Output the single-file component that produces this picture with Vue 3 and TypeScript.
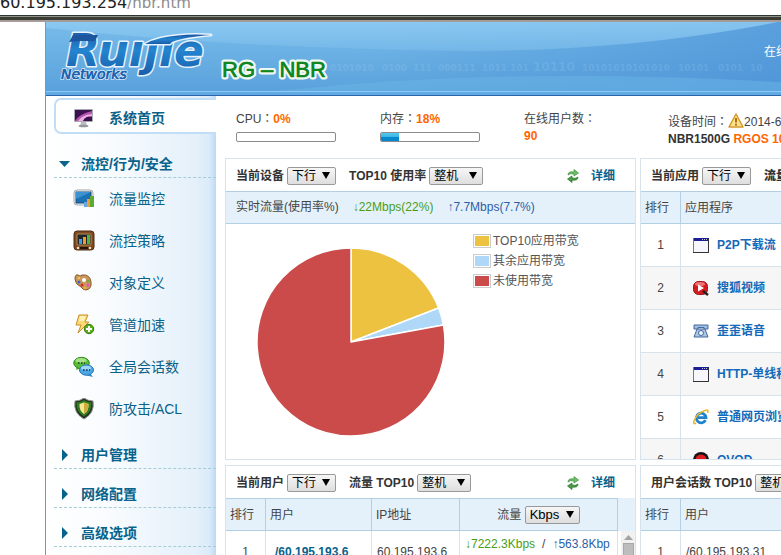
<script setup lang="ts">
import { computed, ref } from 'vue'

interface Slice {
  label: string
  value: number
  color: string
}

const menu = [
  { icon: 'monitor', label: '流量监控' },
  { icon: 'policy', label: '流控策略' },
  { icon: 'palette', label: '对象定义' },
  { icon: 'bolt', label: '管道加速' },
  { icon: 'chat', label: '全局会话数' },
  { icon: 'shield', label: '防攻击/ACL' },
]
const groups = ['用户管理', '网络配置', '高级选项']

const cpu = 0
const memory = 18

const slices: Slice[] = [
  { label: 'TOP10应用带宽', value: 19.1, color: '#edc240' },
  { label: '其余应用带宽', value: 3, color: '#afd8f8' },
  { label: '未使用带宽', value: 77.9, color: '#cb4b4b' },
]

const point = (share: number): string => {
  const a = (share / 100) * Math.PI * 2
  return `${(95 + 94 * Math.sin(a)).toFixed(2)} ${(95 - 94 * Math.cos(a)).toFixed(2)}`
}

const wedges = computed(() => {
  let start = 0
  return slices.map((s) => {
    const end = start + s.value
    const d = `M95 95L${point(start)}A94 94 0 ${s.value > 50 ? 1 : 0} 1 ${point(end)}Z`
    start = end
    return { d, color: s.color }
  })
})

const apps = [
  { icon: 'window', name: 'P2P下载流' },
  { icon: 'sohu', name: '搜狐视频' },
  { icon: 'phone', name: '歪歪语音' },
  { icon: 'window', name: 'HTTP-单线程' },
  { icon: 'ie', name: '普通网页浏览' },
  { icon: 'qvod', name: 'QVOD' },
]

const deviceDir = ref('下行')
const deviceScope = ref('整机')
const appDir = ref('下行')
const userDir = ref('下行')
const userScope = ref('整机')
const unit = ref('Kbps')
const sessionScope = ref('整机')
</script>

<template>
  <div class="address"><span>60.195.193.254<i>/hbr.htm</i></span></div>
  <div class="page">
    <header class="banner">
      <svg class="scene" viewBox="0 0 1100 69" aria-hidden="true">
        <defs>
          <linearGradient id="base" x1="0" y1="0" x2="0" y2="1">
            <stop offset="0" stop-color="#78bcea" />
            <stop offset="1" stop-color="#5aa2dc" />
          </linearGradient>
          <linearGradient id="depth" x1="0" y1="0" x2="1" y2="0">
            <stop offset="0.3" stop-color="#4a90d6" stop-opacity="0" />
            <stop offset="0.7" stop-color="#4a90d6" stop-opacity="0.7" />
          </linearGradient>
          <linearGradient id="gloss" x1="0" y1="0" x2="0" y2="1">
            <stop offset="0" stop-color="#8ecbf3" />
            <stop offset="1" stop-color="#76b8e8" />
          </linearGradient>
        </defs>
        <rect width="1100" height="69" fill="url(#base)" />
        <rect width="1100" height="69" fill="url(#depth)" />
        <path d="M0 6Q200 27 430 29Q590 28 732 0H0Z" fill="url(#gloss)" opacity="0.85" />
        <path d="M230 69Q370 54 520 54Q650 54 760 62L1100 69Z" fill="#6db9e6" opacity="0.45" />
        <g fill="#a8d4f4" fill-opacity="0.2" font-family="'DejaVu Sans', sans-serif" font-weight="bold" font-size="9">
          <text x="284" y="49">0101010</text>
          <text x="336" y="49">0100</text>
          <text x="367" y="49">111</text>
          <text x="392" y="49">000111</text>
          <text x="436" y="49">1011</text>
          <text x="464" y="49">101</text>
          <text x="536" y="49">10101010101010</text>
          <text x="632" y="49">10101</text>
          <text x="672" y="49">0101</text>
          <text x="704" y="49">10</text>
          <text x="487" y="49" font-size="12">10110</text>
        </g>
      </svg>
      <svg class="logo" viewBox="0 0 290 69" role="img" aria-label="Ruijie Networks RG – NBR">
        <defs>
          <linearGradient id="ink" x1="0" y1="0" x2="0" y2="1">
            <stop offset="0" stop-color="#1c4f9e" />
            <stop offset="0.5" stop-color="#2385d0" />
            <stop offset="1" stop-color="#1a5ca8" />
          </linearGradient>
        </defs>
        <g stroke="#e6f3fc" stroke-width="3" stroke-linejoin="round" paint-order="stroke" font-family="'DejaVu Sans', sans-serif" font-weight="bold" font-style="italic">
          <text x="20" y="44" font-size="44" fill="url(#ink)">Ruıȷıe</text>
          <path d="M99 22Q106 18 115 16Q138 11 165 13Q138 15 126 20L124 22Z" fill="url(#ink)" />
          <path d="M23 20L27 13H52L49 19H33Z" fill="#1d569f" stroke="none" />
          <text x="15" y="57" font-size="14" font-weight="normal" fill="#1d62b0" stroke-width="2">Networks</text>
          <text x="15" y="57" font-size="14" font-weight="normal" fill="#1d62b0" stroke="#1d62b0" stroke-width="0.500" aria-hidden="true">Networks</text>
        </g>
        <text x="176" y="55" font-family="'Liberation Sans', sans-serif" font-size="22" fill="#108622" stroke="#eef8f0" stroke-width="5" stroke-linejoin="round" paint-order="stroke">RG – NBR</text>
        <text x="176" y="55" font-family="'Liberation Sans', sans-serif" font-size="22" fill="#108622" stroke="#108622" stroke-width="0.500" aria-hidden="true">RG – NBR</text>
      </svg>
      <nav class="toplinks"><a href="#service">在线</a></nav>
    </header>

    <div class="body">
      <aside class="side">
        <a class="home" href="#home">
          <svg class="icon" viewBox="0 0 22 22" aria-hidden="true">
            <rect x="1" y="2" width="19" height="13" rx="1" fill="#a9abb2" />
            <rect x="2" y="3" width="17" height="11" fill="#3b124f" />
            <path d="M2 14Q6 7 19 4V10Q10 9 7 14Z" fill="#b555ae" />
            <path d="M5 14Q9 8 19 7V9Q12 9 10 14Z" fill="#eab0e2" />
            <path d="M8 15H13L14 19H7Z" fill="#b9bcc1" />
            <ellipse cx="10.500" cy="19" rx="5" ry="1.300" fill="#95989d" />
          </svg>
          <b>系统首页</b>
        </a>
        <button class="group" type="button" aria-expanded="true">
          <svg viewBox="0 0 12 12" aria-hidden="true"><path d="M0 3H11L5.500 9Z" fill="#07628c" /></svg>流控/行为/安全
        </button>
        <a v-for="m in menu" :key="m.label" class="item" href="#item">
          <svg class="icon" viewBox="0 0 22 22" aria-hidden="true">
            <g v-if="m.icon === 'monitor'">
              <rect x="1" y="2" width="19" height="15" rx="3" fill="#f3f5f6" stroke="#a4a9ac" />
              <rect x="3" y="4" width="15" height="11" fill="#1d72b5" stroke="#174a75" />
              <path d="M3 4H18L3 11Z" fill="#3b93d2" />
              <rect x="11" y="14" width="3" height="5" fill="#5fa9e6" />
              <rect x="14" y="11" width="3" height="8" fill="#f19b32" />
              <rect x="17" y="8" width="4" height="11" fill="#58ab37" />
            </g>
            <g v-else-if="m.icon === 'policy'">
              <rect x="1" y="1" width="20" height="19" rx="3" fill="#7f4a20" stroke="#4e2a10" />
              <rect x="4" y="4" width="14" height="11" rx="1" fill="#20262a" stroke="#b98b58" />
              <rect x="6" y="9" width="3" height="5" fill="#3f9ede" />
              <rect x="10" y="7" width="3" height="7" fill="#f39b2c" />
              <rect x="14" y="5" width="3" height="9" fill="#4eb33c" />
              <path d="M7 18H15" stroke="#1f1712" stroke-width="2" />
              <circle cx="5" cy="18" r="1.200" fill="#eee1cc" />
              <circle cx="17" cy="18" r="1.200" fill="#eee1cc" />
            </g>
            <g v-else-if="m.icon === 'palette'">
              <path d="M2 7Q2 2 5 3Q7 5 9 3Q17 2 18 10Q19 17 13 18Q10 18 8 15Q2 12 2 7Z" fill="#c9975e" stroke="#8a5728" />
              <circle cx="11" cy="8" r="2" fill="#fff" />
              <circle cx="6" cy="6" r="1.300" fill="#efc15b" />
              <circle cx="6" cy="10" r="1.500" fill="#3c67c6" />
              <circle cx="9" cy="13" r="1.500" fill="#d92727" />
              <circle cx="15" cy="9" r="1.500" fill="#70a836" />
              <circle cx="15" cy="13" r="1.500" fill="#e44fc1" />
              <circle cx="12" cy="16" r="1.200" fill="#e6bc34" />
            </g>
            <g v-else-if="m.icon === 'bolt'">
              <path d="M6 1H15L12 8H16L5 19L8 11H3Z" fill="#fbd977" stroke="#c99029" />
              <path d="M7 2H13L11 7H6Z" fill="#fff0b6" />
              <circle cx="16" cy="15" r="4.700" fill="#5aad1c" stroke="#367c0b" />
              <path d="M16 12V18M13 15H19" stroke="#fff" stroke-width="2" />
            </g>
            <g v-else-if="m.icon === 'chat'">
              <path d="M4 10L3 14L8 12Z" fill="#43a52a" />
              <ellipse cx="8.500" cy="7" rx="7.800" ry="5.700" fill="#58bc36" stroke="#2f8a1d" />
              <ellipse cx="8" cy="4.500" rx="5.500" ry="2.500" fill="#a3e086" />
              <path d="M16 16L20 21L12 19Z" fill="#2f86c4" />
              <ellipse cx="13.500" cy="14" rx="7" ry="5.200" fill="#4ba7e4" stroke="#2878b5" />
              <ellipse cx="13" cy="12" rx="5" ry="2.200" fill="#9dd4f7" />
              <path d="M5 7H12" stroke="#123c12" stroke-width="1.600" stroke-dasharray="1.600 1.400" />
              <path d="M10 14H17" stroke="#0c2e4b" stroke-width="1.600" stroke-dasharray="1.600 1.400" />
            </g>
            <g v-else>
              <path d="M11 0Q15 3 20 3Q22 15 11 21Q0 15 2 3Q7 3 11 0Z" fill="#253224" stroke="#90958e" />
              <path d="M11 2Q14 4 18.500 4.500Q19 14 11 18.500Q3 14 3.500 4.500Q8 4 11 2Z" fill="#2f7d1e" />
              <path d="M11 4.500L15.500 6Q16 13 11 16Q6 13 6.500 6Z" fill="#f4e78c" />
              <path d="M11 4.500L15.500 6Q16 13 11 16Z" fill="#cfae40" />
            </g>
          </svg>
          {{ m.label }}
        </a>
        <button v-for="g in groups" :key="g" class="group" type="button" aria-expanded="false">
          <svg viewBox="0 0 12 12" aria-hidden="true"><path d="M3 0L9 6L3 12Z" fill="#07628c" /></svg>{{ g }}
        </button>
      </aside>

      <main class="main">
        <section class="stats">
          <div>
            <p>CPU<span class="colon">：</span><strong>{{ cpu }}%</strong></p>
            <div class="meter"><div :style="{ width: cpu + '%' }" /></div>
          </div>
          <div>
            <p>内存<span class="colon">：</span><strong>{{ memory }}%</strong></p>
            <div class="meter"><div :style="{ width: memory + '%' }" /></div>
          </div>
          <div>
            <p>在线用户数<span class="colon">：</span></p>
            <p><strong>90</strong></p>
          </div>
          <div class="device">
            <p>
              设备时间<span class="colon">：</span><svg viewBox="0 0 16 15" aria-hidden="true">
                <path d="M8 1L15 14H1Z" fill="#fbe38c" stroke="#d49a2c" stroke-width="1.500" stroke-linejoin="round" />
                <path d="M8 5V9.500" stroke="#b46d12" stroke-width="2" />
                <circle cx="8" cy="11.700" r="1.100" fill="#b46d12" />
              </svg>2014-6
            </p>
            <p><b>NBR1500G</b> <strong>RGOS 10.</strong></p>
          </div>
        </section>

        <div class="grid">
          <section class="panel tall">
            <div class="head">
              <label for="dev-dir">当前设备</label>
              <span class="pick"><select id="dev-dir" v-model="deviceDir"><option>下行</option></select><svg viewBox="0 0 8 7" aria-hidden="true"><path d="M0 0H8L4 7Z" /></svg></span>
              <label class="next" for="dev-scope">TOP10 使用率</label>
              <span class="pick wide"><select id="dev-scope" v-model="deviceScope"><option>整机</option></select><svg viewBox="0 0 8 7" aria-hidden="true"><path d="M0 0H8L4 7Z" /></svg></span>
              <button class="refresh" type="button" aria-label="刷新">
                <svg viewBox="0 0 12 14" aria-hidden="true">
                  <path d="M1 6Q1 2 7 3V0.500L11.500 4L7 7V5Q3 4 1 6Z" fill="#6fbe68" stroke="#3d8c3a" stroke-width="0.700" />
                  <path d="M11 8Q11 12 5 11V13.500L0.500 10L5 7V9Q9 10 11 8Z" fill="#469d42" stroke="#2a6f2b" stroke-width="0.700" />
                </svg>
              </button>
              <a class="more" href="#detail">详细</a>
            </div>
            <div class="rate">实时流量(使用率%)<span class="down">↓22Mbps(22%)</span><span class="up">↑7.7Mbps(7.7%)</span></div>
            <div class="chart">
              <svg viewBox="0 0 190 190" role="img" aria-label="带宽">
                <path v-for="w in wedges" :key="w.color" :d="w.d" :fill="w.color" stroke="#fff" stroke-width="1.500" stroke-linejoin="round" />
              </svg>
              <ul>
                <li v-for="s in slices" :key="s.label"><span class="swatch"><i :style="{ background: s.color }" /></span>{{ s.label }}</li>
              </ul>
            </div>
          </section>

          <section class="panel tall">
            <div class="head">
              <label for="app-dir">当前应用</label>
              <span class="pick"><select id="app-dir" v-model="appDir"><option>下行</option></select><svg viewBox="0 0 8 7" aria-hidden="true"><path d="M0 0H8L4 7Z" /></svg></span>
              <b class="next">流量</b>
            </div>
            <table class="apps">
              <colgroup><col class="rank" /><col /></colgroup>
              <thead><tr><th>排行</th><th>应用程序</th></tr></thead>
              <tbody>
                <tr v-for="(a, i) in apps" :key="i">
                  <td>{{ i + 1 }}</td>
                  <td>
                    <a href="#app">
                      <svg viewBox="0 0 16 16" aria-hidden="true">
                        <g v-if="a.icon === 'window'">
                          <rect x="0.500" y="1.500" width="15" height="14" fill="#f6f6fc" stroke="#777" />
                          <path d="M1 1H16V4H1Z" fill="#1d1d96" />
                          <path d="M9 2.500H15" stroke="#c5c5d8" stroke-dasharray="1 1" />
                          <path d="M0 15.500H15.500V2" fill="none" stroke="#333" />
                        </g>
                        <g v-else-if="a.icon === 'sohu'">
                          <rect x="0.500" y="1.500" width="14" height="13" rx="5" fill="#d31c20" stroke="#9e1418" />
                          <ellipse cx="7" cy="4" rx="5" ry="2" fill="#ef7377" />
                          <path d="M5 4.500L11 8L5 11.500Z" fill="#fff" />
                          <path d="M10 11L15 15" stroke="#222" stroke-width="2.500" />
                        </g>
                        <g v-else-if="a.icon === 'phone'">
                          <path d="M1 2H15V6H11V4.500H5V6H1Z" fill="#9fbfe2" stroke="#45699b" />
                          <path d="M4 6H12L15 14H1Z" fill="#a9c6e7" stroke="#45699b" />
                          <circle cx="8" cy="10" r="2.500" fill="#edf4fc" stroke="#45699b" />
                        </g>
                        <g v-else-if="a.icon === 'ie'">
                          <path d="M12.500 11.200A4.800 4.800 0 1 1 13 8.700H5" fill="none" stroke="#1e83cc" stroke-width="2.800" />
                          <path d="M3 14Q0 16 1 12Q4 4 12 1.500Q16 0 14.500 4" fill="none" stroke="#e8b92e" stroke-width="1.600" />
                        </g>
                        <g v-else>
                          <circle cx="8" cy="8" r="8" fill="#151515" />
                          <circle cx="8" cy="8" r="5.500" fill="#e11c22" />
                        </g>
                      </svg>{{ a.name }}
                    </a>
                  </td>
                </tr>
              </tbody>
            </table>
          </section>

          <section class="panel">
            <div class="head">
              <label for="user-dir">当前用户</label>
              <span class="pick"><select id="user-dir" v-model="userDir"><option>下行</option></select><svg viewBox="0 0 8 7" aria-hidden="true"><path d="M0 0H8L4 7Z" /></svg></span>
              <label class="next" for="user-scope">流量 TOP10</label>
              <span class="pick wide"><select id="user-scope" v-model="userScope"><option>整机</option></select><svg viewBox="0 0 8 7" aria-hidden="true"><path d="M0 0H8L4 7Z" /></svg></span>
              <button class="refresh" type="button" aria-label="刷新">
                <svg viewBox="0 0 12 14" aria-hidden="true">
                  <path d="M1 6Q1 2 7 3V0.500L11.500 4L7 7V5Q3 4 1 6Z" fill="#6fbe68" stroke="#3d8c3a" stroke-width="0.700" />
                  <path d="M11 8Q11 12 5 11V13.500L0.500 10L5 7V9Q9 10 11 8Z" fill="#469d42" stroke="#2a6f2b" stroke-width="0.700" />
                </svg>
              </button>
              <a class="more" href="#detail">详细</a>
            </div>
            <div class="scroller">
              <table class="users">
                <colgroup><col class="rank" /><col class="user" /><col class="ip" /><col /></colgroup>
                <thead>
                  <tr>
                    <th>排行</th>
                    <th>用户</th>
                    <th>IP地址</th>
                    <th class="flow"><label for="unit">流量</label> <span class="pick unit"><select id="unit" v-model="unit"><option>Kbps</option></select><svg viewBox="0 0 8 7" aria-hidden="true"><path d="M0 0H8L4 7Z" /></svg></span></th>
                  </tr>
                </thead>
                <tbody>
                  <tr>
                    <td>1</td>
                    <td><a href="#user">/60.195.193.6</a></td>
                    <td>60.195.193.6</td>
                    <td class="speed"><span class="down">↓7222.3Kbps</span><span class="slash">/</span><span class="up">↑563.8Kbp</span></td>
                  </tr>
                </tbody>
              </table>
              <div class="track" aria-hidden="true">
                <svg viewBox="0 0 14 12"><path d="M3 9H12L7.500 4Z" fill="#a3a3a3" /></svg>
                <div class="thumb" />
              </div>
            </div>
          </section>

          <section class="panel">
            <div class="head">
              <label for="ses-scope">用户会话数 TOP10</label>
              <span class="pick wide"><select id="ses-scope" v-model="sessionScope"><option>整机</option></select><svg viewBox="0 0 8 7" aria-hidden="true"><path d="M0 0H8L4 7Z" /></svg></span>
            </div>
            <table class="sessions">
              <colgroup><col class="rank" /><col /></colgroup>
              <thead><tr><th>排行</th><th>用户</th></tr></thead>
              <tbody><tr><td>1</td><td>/60.195.193.31</td></tr></tbody>
            </table>
          </section>
        </div>
      </main>
    </div>
  </div>
</template>

<style>
html,
body {
  margin: 0;
  overflow: hidden;
  background: #fff;
}
#app {
  height: 100vh;
  overflow: hidden;
  display: flex;
  flex-direction: column;
}
</style>

<style scoped>
* {
  box-sizing: border-box;
}
p,
ul {
  margin: 0;
  padding: 0;
  list-style: none;
}
a {
  text-decoration: none;
}
.address {
  flex: none;
  display: flex;
  align-items: flex-end;
  height: 22px;
  padding-bottom: 8px;
  overflow: hidden;
  font: 16px/22px 'DejaVu Sans', sans-serif;
  color: #222;
  background: linear-gradient(#fff 15px, #2d352f 15px, #2d352f 16px, #91928a 16px, #91928a 17px, #3b3c33 17px, #3b3c33 20px, #a59c99 20px);
}
.address i {
  font-size: 15px;
  font-style: normal;
  color: #8c8c8c;
}
.page {
  flex: 1;
  display: flex;
  flex-direction: column;
  min-width: 1006px;
  margin-left: 45px;
  border-left: 1px solid #7699b5;
  overflow: hidden;
  font: 12px/18px 'Liberation Sans', 'Noto Sans CJK SC', sans-serif;
  color: #444;
}
.banner {
  position: relative;
  flex: none;
  display: flex;
  height: 74px;
  overflow: hidden;
  border-bottom: 1px solid #2965a8;
  background: linear-gradient(#8dcaf5 69px, #8dcaf5 70px, #62aae3 70px);
}
.scene {
  position: absolute;
  top: 0;
  left: 0;
  width: 1100px;
  height: 69px;
}
.logo {
  position: relative;
  width: 290px;
  height: 69px;
}
.toplinks {
  position: relative;
  margin-left: auto;
  padding: 21px 263px 0 0;
}
.toplinks a {
  color: #fff;
}
.body {
  flex: 1;
  display: flex;
}
.side {
  flex: none;
  width: 170px;
  padding: 2px 0 0 8px;
  background: linear-gradient(90deg, #fff 0, #f9fcfe 60px, #e4f0fa 150px, #dcebf9 163px, #bddaf4 170px);
}
.home,
.item {
  display: flex;
  align-items: center;
  gap: 14px;
  padding-left: 19px;
  font-size: 14px;
  color: #0b6188;
}
.home {
  height: 36px;
  margin-bottom: 5px;
  border: 2px solid #c1def6;
  border-right: 0;
  border-radius: 7px 0 0 7px;
  background: #fff;
  padding: 3px 0 0 17px;
}
.item {
  height: 42px;
}
.icon {
  width: 22px;
  height: 22px;
}
.group {
  display: flex;
  align-items: center;
  gap: 10px;
  width: 100%;
  height: 39px;
  padding: 12px 0 0 5px;
  border: 0;
  border-bottom: 1px dashed #a5cdd6;
  background: none;
  font: bold 14px/20px 'Liberation Sans', 'Noto Sans CJK SC', sans-serif;
  color: #07628c;
}
.group svg {
  width: 12px;
  height: 12px;
}
.main {
  flex: 1;
  padding-left: 9px;
}
.stats {
  display: flex;
  height: 62px;
  padding: 13px 0 0 11px;
  white-space: nowrap;
}
.stats > div {
  width: 144px;
}
.stats p {
  height: 18px;
}
/* The traditional face centres the full-width colon in its cell. */
.colon {
  font-family: 'Noto Sans CJK TC', sans-serif;
}
strong {
  color: #ff6600;
}
.meter {
  width: 100px;
  height: 10px;
  margin-top: 5px;
  border: 1px solid #8b8b8b;
  border-radius: 2px;
  background: #fff;
  overflow: hidden;
}
.meter div {
  height: 100%;
  background: linear-gradient(#55c8ee 0, #38b5e5 50%, #0788cc 50%, #0788cc 100%);
}
.stats .device {
  padding-top: 3px;
}
.device svg {
  width: 16px;
  height: 15px;
  vertical-align: -2px;
}
.device b {
  color: #333;
}
.grid {
  display: grid;
  grid-template-columns: minmax(411px, 1fr) minmax(411px, 1fr);
  gap: 5px 4px;
}
.panel {
  border: 1px solid #d7e3ec;
  overflow: hidden;
}
.tall {
  height: 302px;
}
.head {
  display: flex;
  align-items: center;
  gap: 3px;
  height: 32px;
  padding: 1px 20px 0 10px;
  font-weight: bold;
  color: #333;
  white-space: nowrap;
}
.next {
  margin-left: 10px;
}
.pick {
  position: relative;
  display: inline-flex;
  width: 49px;
  height: 18px;
}
.wide {
  width: 54px;
}
.unit {
  width: 55px;
}
.pick select {
  appearance: none;
  width: 100%;
  height: 18px;
  padding: 0 0 0 4px;
  border: 1px solid #999;
  border-radius: 2px;
  background: linear-gradient(#f6f6f6, #dedede);
  font: 12px/16px 'Liberation Sans', 'Noto Sans CJK SC', sans-serif;
  color: #000;
}
.unit select {
  font-size: 13px;
}
.pick svg {
  position: absolute;
  top: 5px;
  right: 6px;
  width: 8px;
  height: 7px;
  pointer-events: none;
}
.refresh {
  display: flex;
  margin-left: auto;
  padding: 0;
  border: 0;
  background: none;
}
.refresh svg {
  width: 12px;
  height: 14px;
}
.more {
  margin-left: 9px;
  color: #07628c;
}
.rate {
  height: 33px;
  padding-left: 10px;
  border: solid #b3cfe3;
  border-width: 1px 0;
  background: #e4f1fb;
  line-height: 31px;
}
.rate span {
  margin-left: 14px;
}
.down {
  color: #4a9e14;
}
.up {
  color: #2b5ea8;
}
.chart {
  display: flex;
  gap: 27px;
  padding: 7px 0 0 30px;
}
.chart > svg {
  width: 190px;
  height: 190px;
  margin-top: 16px;
}
.chart li {
  display: flex;
  align-items: center;
  gap: 2px;
  height: 20px;
  color: #555;
}
.swatch {
  width: 18px;
  height: 14px;
  padding: 1px;
  border: 1px solid #ccc;
}
.swatch i {
  display: block;
  height: 100%;
}
table {
  width: 100%;
  table-layout: fixed;
  border-collapse: separate;
  border-spacing: 0;
}
.rank {
  width: 40px;
}
.user {
  width: 106px;
}
.ip {
  width: 88px;
}
th {
  height: 33px;
  padding: 0 4px;
  border: solid #b3cfe3;
  border-width: 1px 1px 1px 0;
  background: #e4f1fb;
  font-weight: normal;
  text-align: left;
}
td {
  height: 43px;
  padding: 0 5px;
  border: solid #d7e3ec;
  border-width: 0 1px 1px 0;
}
td:first-child {
  text-align: center;
}
.apps tr:nth-child(even) td {
  background: #f6f6f6;
}
.apps td a {
  display: flex;
  align-items: center;
  gap: 8px;
  padding-left: 7px;
  font-weight: bold;
  color: #1469b8;
  white-space: nowrap;
}
.apps td svg {
  width: 16px;
  height: 16px;
}
.scroller {
  display: flex;
  background: linear-gradient(#e4f1fb 33px, #fff 33px);
}
.users {
  flex: 1;
  width: 0;
}
.users td a {
  padding-left: 4px;
  font-weight: bold;
  color: #07628c;
}
.flow {
  text-align: center;
}
.speed {
  padding-bottom: 16px;
  white-space: nowrap;
  overflow: hidden;
}
.slash {
  margin: 0 7px;
}
.track {
  display: flex;
  flex-direction: column;
  align-items: center;
  width: 14px;
  margin: 33px 0 0 3px;
  background: #f1f1f1;
}
.track svg {
  width: 14px;
  height: 12px;
}
.thumb {
  width: 11px;
  flex: 1;
  border: 1px solid #a8a8a8;
  background: #bdbdbd;
}
</style>
